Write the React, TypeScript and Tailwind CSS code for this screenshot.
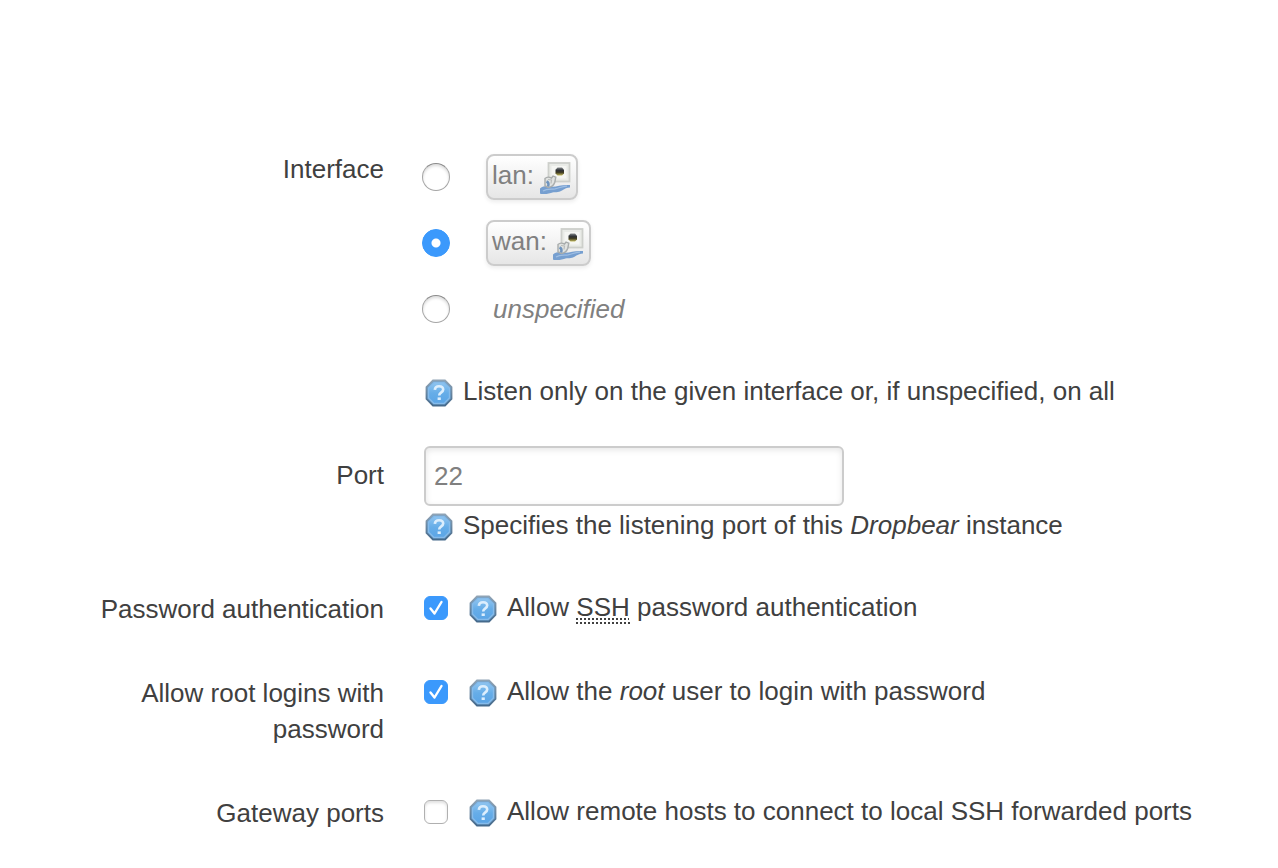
import { useState } from 'react';
import type { ReactNode } from 'react';

function HelpIcon() {
  return (
    <svg viewBox="0 0 28 28" className="h-7 w-7 shrink-0" aria-hidden="true">
      <defs>
        <linearGradient id="help-face" x1="0" y1="0" x2="0" y2="1">
          <stop offset="0" stopColor="#8fc5f0" />
          <stop offset="0.5" stopColor="#66ade8" />
          <stop offset="1" stopColor="#5ba5e6" />
        </linearGradient>
        <linearGradient id="help-rim" x1="0" y1="0" x2="0" y2="1">
          <stop offset="0" stopColor="#8fa3b5" />
          <stop offset="1" stopColor="#456a8c" />
        </linearGradient>
      </defs>
      <path d="M8 1.500h12l6.500 6.500v12L20 26.500H8L1.500 20V8z" fill="#6fa7d6" stroke="url(#help-rim)" strokeWidth="1.800" />
      <path d="M9 3.600h10L24.400 9v10L19 24.400H9L3.600 19V9z" fill="url(#help-face)" stroke="#86bbea" strokeWidth="1.200" />
      <path d="M9.800 10.800c.2-2.400 1.800-3.600 4.200-3.600 2.600 0 4.200 1.300 4.200 3.400 0 3-4 2.600-4 6" fill="none" stroke="#dceefd" strokeWidth="2.600" />
      <rect x="12.600" y="18.400" width="3.200" height="2.600" fill="#dceefd" />
    </svg>
  );
}

function PortIcon() {
  return (
    <svg viewBox="0 0 32 32" className="h-8 w-8 shrink-0" aria-hidden="true">
      <defs>
        <linearGradient id="eye" x1="0" y1="0" x2="0" y2="1">
          <stop offset="0" stopColor="#85898b" />
          <stop offset="0.35" stopColor="#303338" />
          <stop offset="0.6" stopColor="#3b3822" />
          <stop offset="1" stopColor="#c2b85c" />
        </linearGradient>
      </defs>
      <rect x="8.500" y="1" width="21" height="18.500" fill="#e9ebe7" stroke="#cdcfcb" strokeWidth="1.800" />
      <rect x="11.500" y="4" width="15" height="12.500" fill="#f5f6f3" />
      <path d="M17.500 5.500h4.500l2 2.200v3.800l-2 2h-4.500l-2-2V7.700z" fill="url(#eye)" />
      <path d="M0 26.500c3-2.500 7-3 11-2 5 .8 10-2.200 19-1.500v2.500c-3 .3-5 1-8 3-4 2.500-7 1-11 2.500-4 1.200-7 1.500-11 .8z" fill="#769fd0" />
      <path d="M3 29c4-2.500 8-1.500 12-2.200 4-.8 7-2.300 12-2.600" fill="none" stroke="#9fbfe4" strokeWidth="1.200" />
      <path d="M5 16.500c2-2 4.500-1.500 6.500-.5l1.500-2 2.800 1.200-1 5c-1 3-3.300 4.800-6.300 5.300l-3.500-1.500z" fill="#e1e3e1" stroke="#a8acac" strokeWidth="1.400" />
      <path d="M8 17.500l3.500.5-.5 3.500" fill="none" stroke="#b9bcba" strokeWidth="1.200" />
      <path d="M6.500 19.500c1.800.8 2.500 2.500 1.500 5" fill="none" stroke="#6f94bf" strokeWidth="2.500" />
    </svg>
  );
}

function Radio({ id, checked, onChange }: { id: string; checked: boolean; onChange: () => void }) {
  return (
    <input
      id={id}
      type="radio"
      name="interface"
      checked={checked}
      onChange={onChange}
      className="h-7 w-7 shrink-0 appearance-none rounded-full border border-[#a6a6a6] border-t-[#8a8a8a] bg-white shadow-[inset_0_2px_3px_#dcdcdc] checked:border-[#3b99fc] checked:bg-[#3b99fc] checked:bg-[radial-gradient(circle,#ffffff_4px,#3b99fc_5px)] checked:shadow-none"
    />
  );
}

function Badge({ name }: { name: string }) {
  return (
    <span className="flex h-[46px] gap-1.5 rounded-lg border-2 border-[#cccccc] bg-linear-to-b from-white to-[#e6e6e6] pt-[6px] pr-1 pl-1 shadow-[0_2px_4px_#00000014]">
      <span className="-mt-1 leading-[34px]">{name}:</span>
      <PortIcon />
    </span>
  );
}

function Help({ children }: { children: ReactNode }) {
  return (
    <span className="flex items-start gap-[10px]">
      <span className="pt-[6px]">
        <HelpIcon />
      </span>
      <span>{children}</span>
    </span>
  );
}

function CheckRow({ id, label, defaultChecked, children }: { id: string; label: string; defaultChecked?: boolean; children: ReactNode }) {
  return (
    <div className="mt-[46px] grid grid-cols-[320px_1fr] gap-10">
      <label htmlFor={id} className="pt-0.5 text-right">{label}</label>
      <div className="flex items-start gap-[21px]">
        <span className="grid pt-[7px]">
          <input
            id={id}
            type="checkbox"
            defaultChecked={defaultChecked}
            className="peer col-start-1 row-start-1 h-6 w-6 appearance-none rounded-[6px] border border-[#b0b0b0] bg-white shadow-[inset_0_2px_3px_#e0e0e0] checked:border-[#3b99fc] checked:bg-[#3b99fc] checked:shadow-none"
          />
          <svg viewBox="0 0 24 24" className="pointer-events-none invisible col-start-1 row-start-1 h-6 w-6 peer-checked:visible" aria-hidden="true">
            <path d="M6.500 12.500l4 5L17.500 6" fill="none" stroke="#fff" strokeWidth="2.400" strokeLinecap="round" strokeLinejoin="round" />
          </svg>
        </span>
        <Help>{children}</Help>
      </div>
    </div>
  );
}

export default function App() {
  const [selected, setSelected] = useState('wan');
  return (
    <form className="min-h-screen bg-white pt-[151px] pb-9 pl-16 font-['Liberation_Sans',Arial,sans-serif] text-[26px] leading-9 text-[#404040]">
      <div className="grid grid-cols-[320px_1fr] gap-10">
        <div id="interface-label" className="text-right">Interface</div>
        <div className="pt-[3px]">
          <div role="radiogroup" aria-labelledby="interface-label" className="-ml-0.5 flex flex-col gap-5 text-[#808080]">
            {['lan', 'wan'].map((name) => (
              <div key={name} className="flex h-[46px] items-center gap-9">
                <Radio id={name} checked={selected === name} onChange={() => setSelected(name)} />
                <label htmlFor={name}><Badge name={name} /></label>
              </div>
            ))}
            <div className="flex h-[46px] items-center gap-[43px]">
              <Radio id="unspecified" checked={selected === 'unspecified'} onChange={() => setSelected('unspecified')} />
              <label htmlFor="unspecified" className="italic">unspecified</label>
            </div>
          </div>
          <div className="mt-[41px] pl-px">
            <Help>Listen only on the given interface or, if unspecified, on all</Help>
          </div>
        </div>
      </div>

      <div className="mt-[37px] grid grid-cols-[320px_1fr] gap-10">
        <label htmlFor="port" className="pt-[11px] text-right">Port</label>
        <div>
          <input
            id="port"
            type="text"
            defaultValue="22"
            className="block h-[60px] w-[420px] max-w-full rounded-[6px] border-2 border-[#cccccc] bg-white px-2 text-[#808080] shadow-[inset_0_2px_6px_#0000001a] outline-none"
          />
          <div className="pt-px pl-px">
            <Help>Specifies the listening port of this <i>Dropbear</i> instance</Help>
          </div>
        </div>
      </div>

      <CheckRow id="password-auth" label="Password authentication" defaultChecked>
        Allow <abbr title="Secure Shell" className="border-b-2 border-dotted border-[#404040] underline decoration-dotted decoration-2 underline-offset-2">SSH</abbr> password authentication
      </CheckRow>
      <CheckRow id="root-login" label="Allow root logins with password" defaultChecked>
        Allow the <i>root</i> user to login with password
      </CheckRow>
      <CheckRow id="gateway-ports" label="Gateway ports">
        Allow remote hosts to connect to local SSH forwarded ports
      </CheckRow>
    </form>
  );
}
